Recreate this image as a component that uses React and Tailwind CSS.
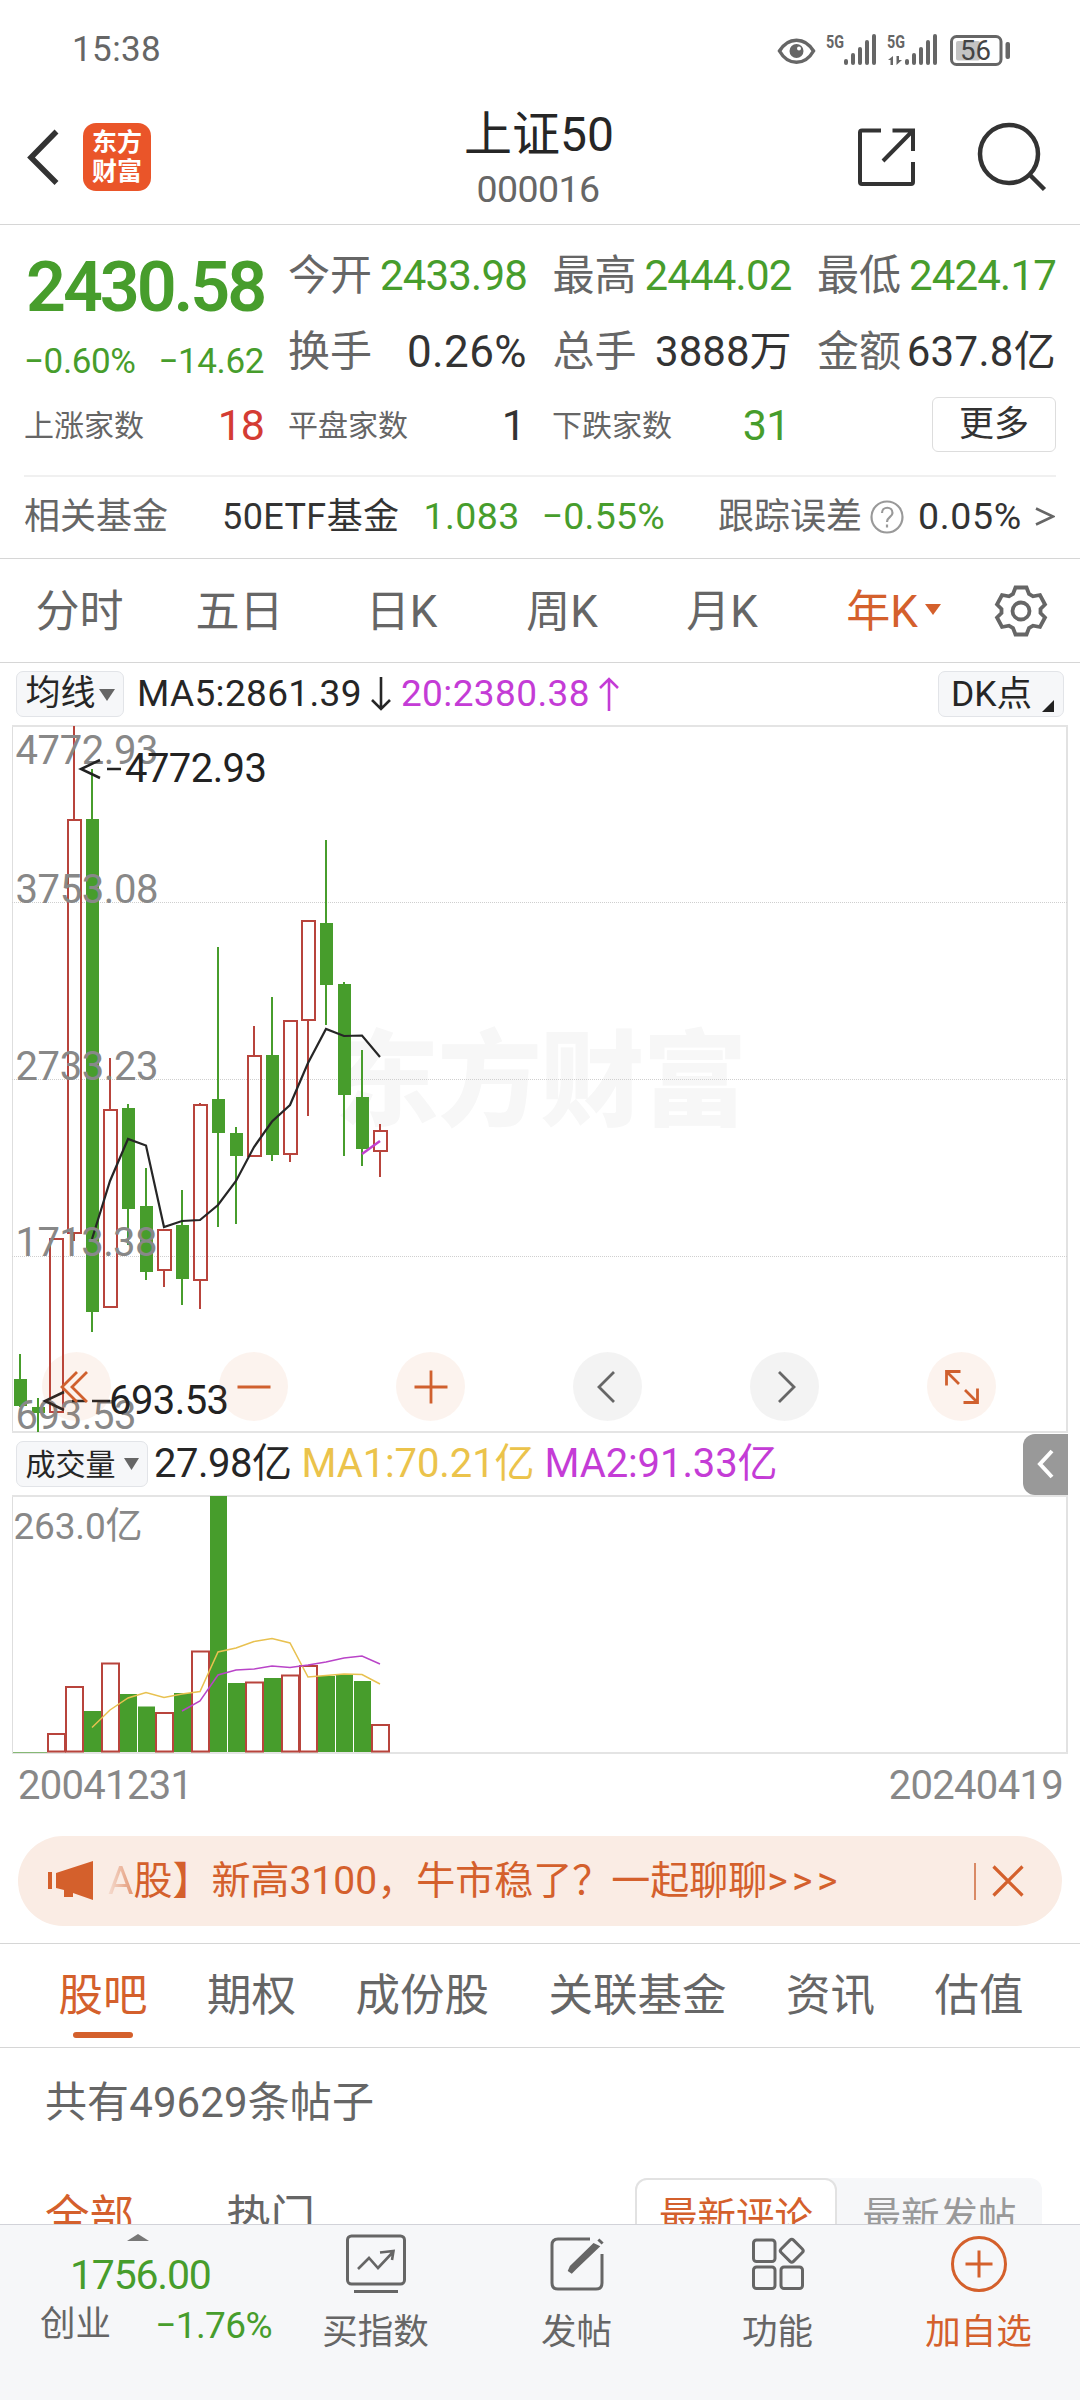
import React from "react";

const GREEN = "#479d2c";
const RED = "#b8443c";

// [direction, high, bodyTop, bodyBottom, low, volumeTop]
const candles = [
  ["g", 1354, 1379, 1406, 1407, 1752],
  ["g", 1398, 1407, 1413, 1432, 1752],
  ["r", 1238, 1239, 1412, 1412, 1734],
  ["r", 726, 820, 1233, 1241, 1687],
  ["g", 769, 819, 1312, 1332, 1711],
  ["r", 1058, 1110, 1307, 1308, 1663.5],
  ["g", 1104, 1108, 1209, 1245, 1694],
  ["g", 1168, 1206, 1272, 1280, 1706.5],
  ["r", 1229, 1230, 1270, 1287, 1713],
  ["g", 1190, 1225, 1279, 1305, 1693],
  ["r", 1103, 1105, 1280, 1309, 1651.5],
  ["g", 947, 1099, 1133, 1227, 1496],
  ["g", 1127, 1133, 1156, 1224, 1683],
  ["r", 1026, 1056, 1156, 1156, 1682.5],
  ["g", 997, 1055, 1155, 1161, 1678],
  ["r", 1021, 1021, 1154, 1162, 1675.5],
  ["r", 921, 921, 1020, 1116, 1666],
  ["g", 840, 923, 985, 1025, 1676],
  ["g", 982, 984, 1095, 1156, 1675],
  ["g", 1050, 1097, 1149, 1166, 1681],
  ["r", 1124, 1131, 1151, 1177, 1725],
];

const priceLabels = [
  ["4772.93", 763, 140],
  ["3753.08", 902, 140],
  ["2733.23", 1079, 140],
  ["1713.38", 1255, 139],
  ["693.53", 1428, 118],
];

function Candle({ i, d }) {
  const [dir, high, top, bottom, low] = d;
  const c = 20 + 18 * i;
  if (dir === "g") {
    return (
      <g fill={GREEN}>
        <rect x={c - 1} y={high} width="2" height={low - high} />
        <rect x={c - 6} y={top} width="13" height={bottom - top} />
      </g>
    );
  }
  return (
    <g>
      <rect x={c - 1} y={high} width="2" height={top - high} fill={RED} />
      <rect x={c - 1} y={bottom} width="2" height={low - bottom} fill={RED} />
      <rect x={c - 6} y={top} width="13" height={bottom - top} fill="none" stroke={RED} strokeWidth="2" />
    </g>
  );
}

function PriceChart() {
  return (
    <svg className="block h-[708px] w-[1080px]" viewBox="0 725 1080 708">
      <text x="335" y="1118" fontSize="104" fontWeight="900" fill="#f7f7f7" textLength="412">东方财富</text>
      <path d="M12.500 725.500V1432" stroke="#dedede" strokeWidth="1" />
      <path d="M1067 725V1432" stroke="#e2e2e2" strokeWidth="2" />
      <path d="M12 726H1068M12 1432H1068" stroke="#e4e4e4" strokeWidth="2" />
      <path d="M12 902.500H1067M12 1079.500H1067M12 1256.500H1067" stroke="#cfcfcf" strokeWidth="1" strokeDasharray="1 1" />
      {candles.map((d, i) => (
        <Candle key={i} i={i} d={d} />
      ))}
      <polyline
        fill="none"
        stroke="#262626"
        strokeWidth="2.2"
        points="92,1239 110,1181 128,1139 146,1145.500 164,1227 182,1221 200,1220 218,1205 236,1181 254,1147 272,1121.500 290,1105 308,1063 326,1029 344,1036 362,1035.500 380,1057"
      />
      <path d="M362 1154L380 1141" stroke="#c23fd0" strokeWidth="2.500" />
      <g fill="#888888" fontSize="40">
        {priceLabels.map(([t, y, w]) => (
          <text key={t} x="15.500" y={y + 0.5} textLength={w + 3}>{t}</text>
        ))}
      </g>
      <g fontSize="40" fill="#222222">
        <text x="125" y="781.500" textLength="142">4772.93</text>
        <text x="109" y="1413.500" textLength="120">693.53</text>
        <g fill="none" stroke="#222222" strokeWidth="2.500">
          <path d="M100 760L81 769L100 778M107 769H121" />
          <path d="M64 1392L45 1401L64 1410M72 1401H86M92 1401H110" />
        </g>
      </g>
    </svg>
  );
}

function VolumeChart() {
  return (
    <svg className="block h-[260px] w-[1080px]" viewBox="0 1495 1080 260">
      <path d="M12.500 1495.500V1753" stroke="#dedede" strokeWidth="1" />
      <path d="M1067 1495V1753" stroke="#e2e2e2" strokeWidth="2" />
      <path d="M12 1496H1068M12 1753H1068" stroke="#e4e4e4" strokeWidth="2" />
      <path d="M13 1752.500H47" stroke={GREEN} strokeWidth="1" strokeOpacity="0.6" />
      {candles.slice(2).map((d, n) => {
        const c = 20 + 18 * (n + 2);
        const top = d[5];
        return d[0] === "g" ? (
          <rect key={n} x={c - 8} y={top} width="17" height={1752 - top} fill={GREEN} />
        ) : (
          <rect key={n} x={c - 8} y={top} width="17" height={1751.5 - top} fill="#fff" stroke={RED} strokeWidth="2" />
        );
      })}
      <polyline
        fill="none"
        stroke="#e8c150"
        strokeWidth="1.500"
        points="92,1727.500 110,1710 128,1698 146,1692.500 164,1697.500 182,1694 200,1691.500 218,1652 236,1648 254,1641.500 272,1638.500 290,1643 308,1677 326,1675.500 344,1674 362,1674.500 380,1684"
      />
      <polyline
        fill="none"
        stroke="#b944c8"
        strokeWidth="1.500"
        points="182,1711 200,1701 218,1675 236,1670 254,1669 272,1666 290,1667.500 308,1665 326,1662 344,1658 362,1656 380,1664"
      />
      <text x="13.500" y="1539" fontSize="37" fill="#888888" textLength="129">263.0亿</text>
    </svg>
  );
}

function StatusIcons() {
  return (
    <svg className="block h-[40px] w-[240px]" viewBox="775 30 240 40" fill="#666666">
      <path d="M779.500 51C788 36.500 805 36.500 813.500 51C805 66 788 66 779.500 51Z" fill="none" stroke="#666666" strokeWidth="3.500" />
      <circle cx="796.500" cy="51" r="7" />
      <circle cx="799" cy="48.500" r="2" fill="#fff" />
      <text x="826" y="48" fontSize="19" fontWeight="700" textLength="18" lengthAdjust="spacingAndGlyphs">5G</text>
      <text x="887" y="48" fontSize="19" fontWeight="700" textLength="18" lengthAdjust="spacingAndGlyphs">5G</text>
      {[844, 905].map((x) => (
        <g key={x}>
          <rect x={x} y="59" width="4" height="6" rx="2" />
          <rect x={x + 7} y="53" width="4" height="12" rx="2" />
          <rect x={x + 14} y="47" width="4" height="18" rx="2" />
          <rect x={x + 21} y="40" width="4" height="25" rx="2" />
          <rect x={x + 28} y="34" width="4" height="31" rx="2" />
        </g>
      ))}
      <path d="M893 56V65H890.500V60H888Z M896.500 56V65L902 60H899V56Z" />
      <rect x="951.500" y="36.500" width="49.500" height="28" rx="5" fill="none" stroke="#666666" strokeWidth="3" />
      <rect x="956" y="41" width="24" height="19.500" rx="2" fill="#c4c4c4" />
      <text x="960" y="60" fontSize="27" textLength="31" lengthAdjust="spacingAndGlyphs" fill="#444">56</text>
      <rect x="1005.500" y="42" width="4.500" height="17" rx="2" />
    </svg>
  );
}

function Stat({ label, value, color }) {
  return (
    <div className="flex h-[60px] items-center justify-between text-[42px]">
      <span className="-ml-px text-[#666666]">{label}</span>
      <span className={color}>{value}</span>
    </div>
  );
}

function ChartButton({ gray, children }) {
  return (
    <div
      className={
        gray
          ? "flex h-[69px] w-[69px] items-center justify-center rounded-full bg-[#666666]/[0.08]"
          : "flex h-[69px] w-[69px] items-center justify-center rounded-full bg-[#d4602c]/[0.08]"
      }
    >
      <svg
        className="h-[46px] w-[46px]"
        viewBox="-23 -23 46 46"
        fill="none"
        stroke={gray ? "#666666" : "#d0602e"}
        strokeWidth="2.8"
      >
        {children}
      </svg>
    </div>
  );
}

function FootItem({ label, orange, children }) {
  return (
    <div className={orange ? "flex w-[201px] flex-col items-center text-[#d4602c]" : "flex w-[201px] flex-col items-center text-[#666666]"}>
      <svg className="mt-[4px] h-[70px] w-[70px]" viewBox="-35 -35 70 70" fill="none" stroke="currentColor" strokeWidth="3">
        {children}
      </svg>
      <span className="mt-[10px] text-[35.500px] leading-[46px]">{label}</span>
    </div>
  );
}

export default function App() {
  return (
    <div className="flex h-[2400px] w-[1080px] flex-col overflow-hidden bg-white font-[Roboto,'Noto_Sans_CJK_SC',sans-serif] text-[#333333] whitespace-nowrap">
      <div className="flex min-h-0 flex-1 flex-col overflow-hidden [&>*]:shrink-0">
        {/* status bar */}
        <div className="flex h-[100px] items-center justify-between pr-[65px] pl-[72px]">
          <span className="pt-px text-[35px] tracking-[0.4px] text-[#666666]">15:38</span>
          <StatusIcons />
        </div>

        {/* title bar */}
        <header className="grid h-[125px] grid-cols-[1fr_auto_1fr] items-start border-b border-[#d6d6d6]">
          <div className="flex items-center pt-[23px]">
            <svg className="ml-[24px] h-[60px] w-[36px]" viewBox="24 127 36 60" fill="none" stroke="#333" strokeWidth="5.5">
              <path d="M56.500 131.500L31 157.500L56.500 183" />
            </svg>
            <div className="ml-[23px] flex h-[68px] w-[68px] flex-col items-center justify-center rounded-[13px] bg-[#ea5529] text-[25px] leading-[29px] font-bold text-white">
              <span>东方</span>
              <span>财富</span>
            </div>
          </div>
          <div className="mt-[7px] flex flex-col items-center">
            <span className="-ml-[2px] text-[48px] leading-[56px] text-[#262626]">上证50</span>
            <span className="-ml-[4px] text-[37.500px] leading-[52px] tracking-[-0.6px] text-[#666666]">000016</span>
          </div>
          <svg className="mt-[22px] mr-[30px] h-[70px] w-[200px] justify-self-end" viewBox="850 122 200 70" fill="none" stroke="#333" strokeWidth="4">
            <path d="M881 130.500H862Q860 130.500 860 132.500V182Q860 184 862 184H911Q913 184 913 182V162" />
            <path d="M892.500 130.500H913V151M913 130.500L883 161" />
            <circle cx="1009" cy="154" r="29" strokeWidth="4.500" />
            <path d="M1029 174L1044.500 189.500" strokeWidth="4.500" />
          </svg>
        </header>

        {/* quote */}
        <section className="h-[334px] border-b border-[#d6d6d6]">
          <div className="flex pt-[20px]">
            <div className="w-[289px] pt-[2px] pl-[26px] text-[#479d2c]">
              <div className="text-[70px] leading-[80px] font-semibold tracking-[-3.1px]">2430.58</div>
              <div className="mt-[15px] -ml-[2px] flex w-[240px] justify-between text-[35px] leading-[40px] tracking-[-0.4px]">
                <span>−0.60%</span>
                <span>−14.62</span>
              </div>
            </div>
            <div className="grid grid-cols-[238px_238px_238px] gap-x-[26.500px] gap-y-[16px]">
              <Stat label="今开" value="2433.98" color="tracking-[-0.8px] text-[#479d2c]" />
              <Stat label="最高" value="2444.02" color="tracking-[-0.8px] text-[#479d2c]" />
              <Stat label="最低" value="2424.17" color="tracking-[-0.8px] text-[#479d2c]" />
              <Stat label="换手" value="0.26%" color="text-[44px] tracking-[0.4px] text-[#333333]" />
              <Stat label="总手" value="3888万" color="text-[#333333]" />
              <Stat label="金额" value="637.8亿" color="tracking-[0.3px] text-[#333333]" />
            </div>
          </div>
          <div className="mt-[15px] flex h-[55px] items-center pl-[24px] text-[30px] text-[#666666]">
            <div className="flex w-[240px] items-center justify-between">
              <span className="pt-[2px]">上涨家数</span>
              <span className="pt-[2px] text-[43px] tracking-[-1px] text-[#d43c33]">18</span>
            </div>
            <div className="ml-[24px] flex w-[238px] items-center justify-between">
              <span className="pt-[2px]">平盘家数</span>
              <span className="pt-[2px] text-[43px] text-[#333]">1</span>
            </div>
            <div className="ml-[26px] flex w-[238px] items-center justify-between">
              <span className="pt-[2px]">下跌家数</span>
              <span className="pt-[2px] text-[43px] tracking-[-0.5px] text-[#479d2c]">31</span>
            </div>
            <div className="mr-[24px] ml-auto flex h-[55px] w-[124px] items-center justify-center rounded-[6px] border border-[#dddddd] pt-[2px] text-[35px] text-[#333]">
              更多
            </div>
          </div>
          <div className="mx-[24px] mt-[23px] h-[2px] bg-[#f0f0f0]" />
          <div className="flex h-[79px] items-center pl-[24px] text-[36px]">
            <span className="text-[#666666]">相关基金</span>
            <span className="ml-[54px] tracking-[0.4px]">50ETF基金</span>
            <span className="ml-[24px] text-[37.500px] tracking-[0.4px] text-[#479d2c]">1.083</span>
            <span className="ml-[22px] text-[37.500px] tracking-[0.2px] text-[#479d2c]">−0.55%</span>
            <span className="ml-auto text-[#666666]">跟踪误差</span>
            <svg className="ml-[8px] h-[34px] w-[34px]" viewBox="-17 -17 34 34" fill="none" stroke="#999" strokeWidth="2.2">
              <circle r="15.500" />
              <path d="M-5 -4C-5 -11 5.500 -11 5.500 -4C5.500 0 0 0 0 5M0 7.500V10.500" />
            </svg>
            <span className="ml-[14px] text-[37.500px] tracking-[0.7px]">0.05%</span>
            <svg className="mr-[25px] ml-[13px] h-[24px] w-[20px]" viewBox="0 0 20 24" fill="none" stroke="#666" strokeWidth="2.6">
              <path d="M1 3.500L18 11.500L1 19.500" />
            </svg>
          </div>
        </section>

        {/* period tabs */}
        <nav className="grid h-[104px] grid-cols-[159px_161px_163px_158px_162px_181px_1fr] items-center border-b border-[#d6d6d6] pt-[2px] text-center text-[44px] text-[#666666]">
          <span>分时</span>
          <span>五日</span>
          <span>日K</span>
          <span>周K</span>
          <span>月K</span>
          <span className="flex items-center justify-center text-[#d4602c]">
            年K
            <svg className="mb-[4px] ml-[7px] h-[11px] w-[16px]" viewBox="0 0 16 11" fill="currentColor">
              <path d="M0 0H16L8 11Z" />
            </svg>
          </span>
          <svg className="ml-[9px] h-[56px] w-[56px]" viewBox="-28 -27 56 56" fill="none" stroke="#666" strokeWidth="3.8">
            <path d="M-5.500 -23.500H5.500L8 -17L12 -14.700L19 -16L24 -6.500L19.500 -2V2L24 6.500L19 16L12 14.700L8 17L5.500 23.500H-5.500L-8 17L-12 14.700L-19 16L-24 6.500L-19.500 2V-2L-24 -6.500L-19 -16L-12 -14.700L-8 -17Z" />
            <circle r="8.500" />
          </svg>
        </nav>

        {/* moving averages */}
        <div className="flex h-[62px] items-center pl-[16px] text-[37px] text-[#262626]">
          <div className="flex h-[46px] w-[108px] items-center justify-center rounded-[7px] border border-[#e2e4e8] bg-[#f6f7f9] pt-px text-[35px]">
            均线
            <svg className="ml-[3px] h-[12px] w-[16px]" viewBox="0 0 16 12" fill="#666">
              <path d="M0 0H16L8 12Z" />
            </svg>
          </div>
          <span className="ml-[13px] tracking-[0.35px]">MA5:2861.39</span>
          <svg className="ml-[9px] h-[34px] w-[20px]" viewBox="0 0 20 34" fill="none" stroke="currentColor" strokeWidth="2.6">
            <path d="M10 0V32M1 23L10 32L19 23" />
          </svg>
          <span className="ml-[10px] tracking-[0.4px] text-[#c43cd6]">20:2380.38</span>
          <svg className="ml-[9px] h-[34px] w-[20px] text-[#c43cd6]" viewBox="0 0 20 34" fill="none" stroke="currentColor" strokeWidth="2.6">
            <path d="M10 34V2M1 11L10 2L19 11" />
          </svg>
          <div className="mr-[16px] ml-auto flex h-[46px] w-[126px] items-center rounded-[7px] border border-[#e2e4e8] bg-[#f6f7f9] pt-px pl-[12px] text-[35.500px]">
            DK点
            <svg className="mt-[22px] ml-[10px] h-[12px] w-[12px]" viewBox="0 0 12 12" fill="#222">
              <path d="M12 0V12H0Z" />
            </svg>
          </div>
        </div>

        <div className="relative">
          <PriceChart />
          <div className="absolute bottom-[12px] left-[42px] flex gap-[108px]">
            <ChartButton>
              <path d="M0 -15L-15 0L0 15M10 -15L-5 0L10 15" />
            </ChartButton>
            <ChartButton>
              <path d="M-16.500 0H16.500" />
            </ChartButton>
            <ChartButton>
              <path d="M-16.500 0H16.500M0 -16.500V16.500" />
            </ChartButton>
            <ChartButton gray>
              <path d="M6 -15L-9 0L6 15" />
            </ChartButton>
            <ChartButton gray>
              <path d="M-6 -15L9 0L-6 15" />
            </ChartButton>
            <ChartButton>
              <path d="M-1.500 -15.500H-15.500V-1.500M-15.500 -15.500L-3 -3M1.500 15.500H15.500V1.500M15.500 15.500L3 3" />
            </ChartButton>
          </div>
        </div>

        {/* volume */}
        <div className="flex h-[62px] items-center pl-[16px] text-[40px] text-[#262626]">
          <div className="flex h-[46px] w-[132px] items-center justify-center rounded-[7px] border border-[#e2e4e8] bg-[#f6f7f9] text-[30px]">
            成交量
            <svg className="ml-[8px] h-[12px] w-[15px]" viewBox="0 0 15 12" fill="#666">
              <path d="M0 0H15L7.500 12Z" />
            </svg>
          </div>
          <span className="ml-[6px] tracking-[-0.5px]">27.98亿</span>
          <span className="ml-[10px] tracking-[-0.1px] text-[#ebc34b]">MA1:70.21亿</span>
          <span className="ml-[10px] tracking-[-0.1px] text-[#c43cd6]">MA2:91.33亿</span>
          <div className="mr-[12px] ml-auto flex h-[61px] w-[45px] items-center justify-center rounded-l-[12px] bg-[#999999]">
            <svg className="h-[30px] w-[18px]" viewBox="0 0 18 30" fill="none" stroke="#fff" strokeWidth="4">
              <path d="M15 2L3 15L15 28" />
            </svg>
          </div>
        </div>
        <VolumeChart />
        <div className="flex h-[60px] items-center justify-between pt-px pr-[17px] pl-[18px] text-[40px] tracking-[-0.7px] text-[#888888]">
          <span>20041231</span>
          <span>20240419</span>
        </div>

        {/* notice */}
        <div className="mx-[18px] mt-[21px] flex h-[90px] items-center rounded-full bg-[#faece4] pl-[30px] text-[39px] text-[#d4602c]">
          <svg className="h-[40px] w-[46px]" viewBox="48 1861 46 40" fill="currentColor">
            <path d="M48 1872H52V1889H48Z M56 1873L93 1861V1900L73 1893V1897H64V1890L56 1888Z" />
          </svg>
          <span className="ml-[14px]">
            <span className="bg-gradient-to-r from-[#d4602c]/10 to-[#d4602c]/60 bg-clip-text text-transparent">A</span>
            股】新高3100，牛市稳了？一起聊聊<span className="tracking-[4.500px]">&gt;&gt;&gt;</span>
          </span>
          <div className="ml-auto h-[37px] w-[2px] bg-[#d98a66]" />
          <svg className="mr-[38px] ml-[16px] h-[32px] w-[32px]" viewBox="0 0 32 32" fill="none" stroke="currentColor" strokeWidth="3.2">
            <path d="M1.500 1.500L30.500 30.500M30.500 1.500L1.500 30.500" />
          </svg>
        </div>

        {/* section tabs */}
        <nav className="mt-[17px] flex h-[105px] items-center gap-[59.500px] border-y border-[#d6d6d6] pt-[2px] pl-[58.500px] text-[44.500px] text-[#666666]">
          <span className="relative text-[#d4602c]">
            股吧
            <span className="absolute -bottom-[8px] left-[14px] h-[6px] w-[60px] rounded-[3px] bg-[#d4602c]" />
          </span>
          <span>期权</span>
          <span>成份股</span>
          <span>关联基金</span>
          <span>资讯</span>
          <span>估值</span>
        </nav>

        <div className="flex h-[109px] items-center pl-[45px] text-[42px] tracking-[0.1px] text-[#666666]">共有49629条帖子</div>

        <div className="mt-[21px] flex h-[78px] items-center pl-[45px] text-[44.500px] text-[#666666]">
          <span className="pt-px text-[#d4602c]">全部</span>
          <span className="ml-[92px] pt-px">热门</span>
          <div className="mr-[38px] ml-auto flex h-[78px] items-center rounded-[12px] bg-[#f6f7f9] text-[38.500px]">
            <span className="flex h-full w-[202px] items-center justify-center rounded-[12px] border-2 border-[#e2e2e2] bg-white text-[#d4602c]">最新评论</span>
            <span className="w-[205px] text-center text-[#999999]">最新发帖</span>
          </div>
        </div>
      </div>

      {/* bottom bar */}
      <footer className="flex h-[176px] shrink-0 border-t border-[#d2d3d9] bg-[#f6f7f9]">
        <div className="w-[275px]">
          <svg className="mt-[9px] ml-[127px] h-[7px] w-[22px]" viewBox="0 0 22 7" fill="#777">
            <path d="M0 7L11 0L22 7Z" />
          </svg>
          <div className="mt-[7px] pl-[70px] text-[41px] leading-[54px] tracking-[-1.2px] text-[#479d2c]">1756.00</div>
          <div className="flex h-[46px] w-[272px] items-center justify-between pl-[40px] text-[35.500px] text-[#666666]">
            <span>创业</span>
            <span className="pt-px text-[37px] tracking-[-0.6px] text-[#479d2c]">−1.76%</span>
          </div>
        </div>
        <FootItem label="买指数">
          <rect x="-28.500" y="-28" width="57" height="48" rx="4" />
          <path d="M-22 27.500H22" />
          <path d="M-18 5L-7 -6L2 4L17 -12M4 -11.500L17.500 -13L16 -4" strokeWidth="2.600" />
        </FootItem>
        <FootItem label="发帖">
          <path d="M13 -25H-19Q-25 -25 -25 -19V19Q-25 25 -19 25H19Q25 25 25 19V-10" />
          <path d="M19 -17L-3 4L-7 8L-5 3.500L17 -18Z" strokeWidth="5" />
          <path d="M22.500 -21.500L24.500 -23.500" strokeWidth="6" />
        </FootItem>
        <FootItem label="功能">
          <rect x="-24.500" y="-24" width="21.500" height="21.500" rx="3" />
          <rect x="-24.500" y="3" width="21.500" height="21.500" rx="3" />
          <rect x="3" y="3" width="21.500" height="21.500" rx="3" />
          <rect x="5" y="-22" width="17.500" height="17.500" rx="2.500" transform="rotate(45 13.750 -13.250)" />
        </FootItem>
        <FootItem label="加自选" orange>
          <circle r="26.500" />
          <path d="M-13.500 0H13.500M0 -13.500V13.500" />
        </FootItem>
      </footer>
    </div>
  );
}
